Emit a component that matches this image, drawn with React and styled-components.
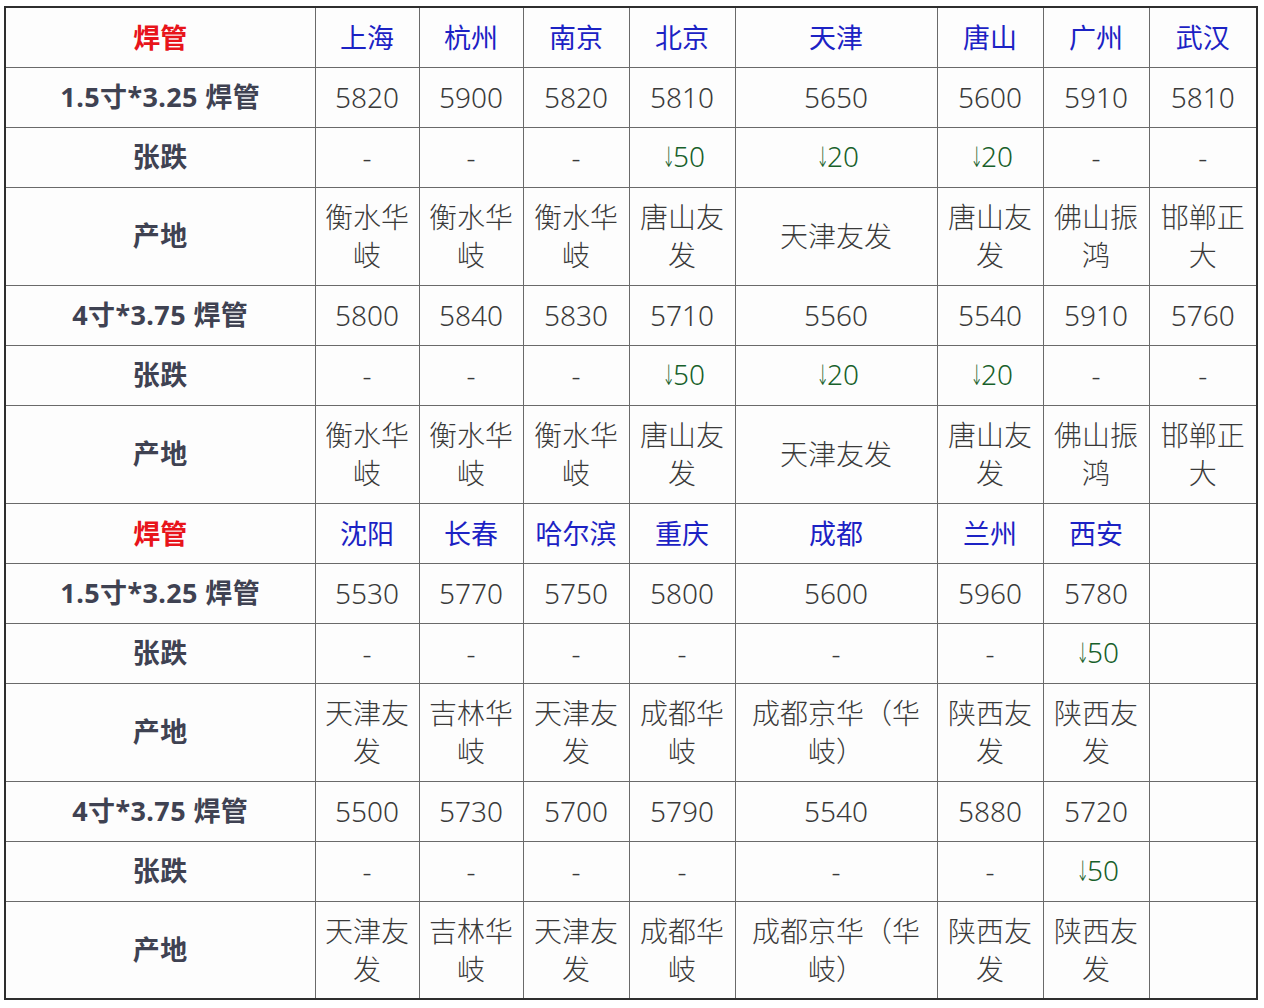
import React from "react";
import styled, { createGlobalStyle } from "styled-components";

const GlobalStyle = createGlobalStyle`
  html, body {
    margin: 0;
    padding: 0;
    background: #ffffff;
  }
  body {
    font-family: "Noto Sans", "Noto Sans CJK SC", sans-serif;
  }
`;

const widths = [310, 104, 104, 106, 106, 202, 106, 106, 108];

const blocks = [
  {
    cities: ["上海", "杭州", "南京", "北京", "天津", "唐山", "广州", "武汉"],
    groups: [
      {
        name: "1.5寸*3.25 焊管",
        prices: ["5820", "5900", "5820", "5810", "5650", "5600", "5910", "5810"],
        change: ["-", "-", "-", "↓50", "↓20", "↓20", "-", "-"],
        origin: ["衡水华岐", "衡水华岐", "衡水华岐", "唐山友发", "天津友发", "唐山友发", "佛山振鸿", "邯郸正大"],
      },
      {
        name: "4寸*3.75 焊管",
        prices: ["5800", "5840", "5830", "5710", "5560", "5540", "5910", "5760"],
        change: ["-", "-", "-", "↓50", "↓20", "↓20", "-", "-"],
        origin: ["衡水华岐", "衡水华岐", "衡水华岐", "唐山友发", "天津友发", "唐山友发", "佛山振鸿", "邯郸正大"],
      },
    ],
  },
  {
    cities: ["沈阳", "长春", "哈尔滨", "重庆", "成都", "兰州", "西安", ""],
    groups: [
      {
        name: "1.5寸*3.25 焊管",
        prices: ["5530", "5770", "5750", "5800", "5600", "5960", "5780", ""],
        change: ["-", "-", "-", "-", "-", "-", "↓50", ""],
        origin: ["天津友发", "吉林华岐", "天津友发", "成都华岐", "成都京华（华岐）", "陕西友发", "陕西友发", ""],
      },
      {
        name: "4寸*3.75 焊管",
        prices: ["5500", "5730", "5700", "5790", "5540", "5880", "5720", ""],
        change: ["-", "-", "-", "-", "-", "-", "↓50", ""],
        origin: ["天津友发", "吉林华岐", "天津友发", "成都华岐", "成都京华（华岐）", "陕西友发", "陕西友发", ""],
      },
    ],
  },
];

const Change = ({ value }) => {
  if (!value.startsWith("↓")) return <Cell>{value}</Cell>;
  return (
    <Cell $down>
      <Arrow>↓</Arrow>
      {value.slice(1)}
    </Cell>
  );
};

const App = () => {
  return (
    <>
      <GlobalStyle />
      <Page>
        <Table>
          <colgroup>
            {widths.map((w, i) => (
              <col key={i} style={{ width: w }} />
            ))}
          </colgroup>
          <tbody>
            {blocks.map((block, bi) => (
              <React.Fragment key={bi}>
                <Row $h={60}>
                  <Title>焊管</Title>
                  {block.cities.map((c, i) => (
                    <City key={i}>{c}</City>
                  ))}
                </Row>
                {block.groups.map((g, gi) => (
                  <React.Fragment key={gi}>
                    <Row $h={60}>
                      <Label>{g.name}</Label>
                      {g.prices.map((p, i) => (
                        <Cell key={i}>{p}</Cell>
                      ))}
                    </Row>
                    <Row $h={60}>
                      <Label>张跌</Label>
                      {g.change.map((c, i) => (
                        <Change key={i} value={c} />
                      ))}
                    </Row>
                    <Row $h={98}>
                      <Label>产地</Label>
                      {g.origin.map((o, i) => (
                        <Cell key={i}>{o}</Cell>
                      ))}
                    </Row>
                  </React.Fragment>
                ))}
              </React.Fragment>
            ))}
          </tbody>
        </Table>
      </Page>
    </>
  );
};

export default App;

const Page = styled.div`
  padding: 6px 0 0 4px;
`;

const Table = styled.table`
  border-collapse: collapse;
  table-layout: fixed;
  width: 1254px;
  border: 2px solid #2e2e2e;
  background: #fdfdfd;
`;

const Row = styled.tr`
  height: ${(p) => p.$h}px;
`;

const Cell = styled.td`
  border: 1.5px solid #6a6a6a;
  padding: 0 8px;
  text-align: center;
  vertical-align: middle;
  font-size: 28px;
  line-height: 38px;
  font-weight: 300;
  color: ${(p) => (p.$down ? "#17602a" : "#3a3a3a")};
  word-break: break-all;
`;

const Arrow = styled.span`
  display: inline-block;
  font-family: "DejaVu Sans", sans-serif;
  font-size: 28px;
  width: 14px;
  transform: scaleX(0.55);
  transform-origin: center;
`;

const Label = styled(Cell)`
  font-weight: 700;
  color: #3f4252;
  font-size: 27px;
  letter-spacing: 0.4px;
`;

const Title = styled(Cell)`
  font-family: "Noto Sans CJK SC", sans-serif;
  font-weight: 700;
  color: #e8141b;
  font-size: 27px;
`;

const City = styled(Cell)`
  font-family: "Noto Sans CJK SC", sans-serif;
  font-weight: 400;
  color: #1c22c4;
  font-size: 27px;
`;
